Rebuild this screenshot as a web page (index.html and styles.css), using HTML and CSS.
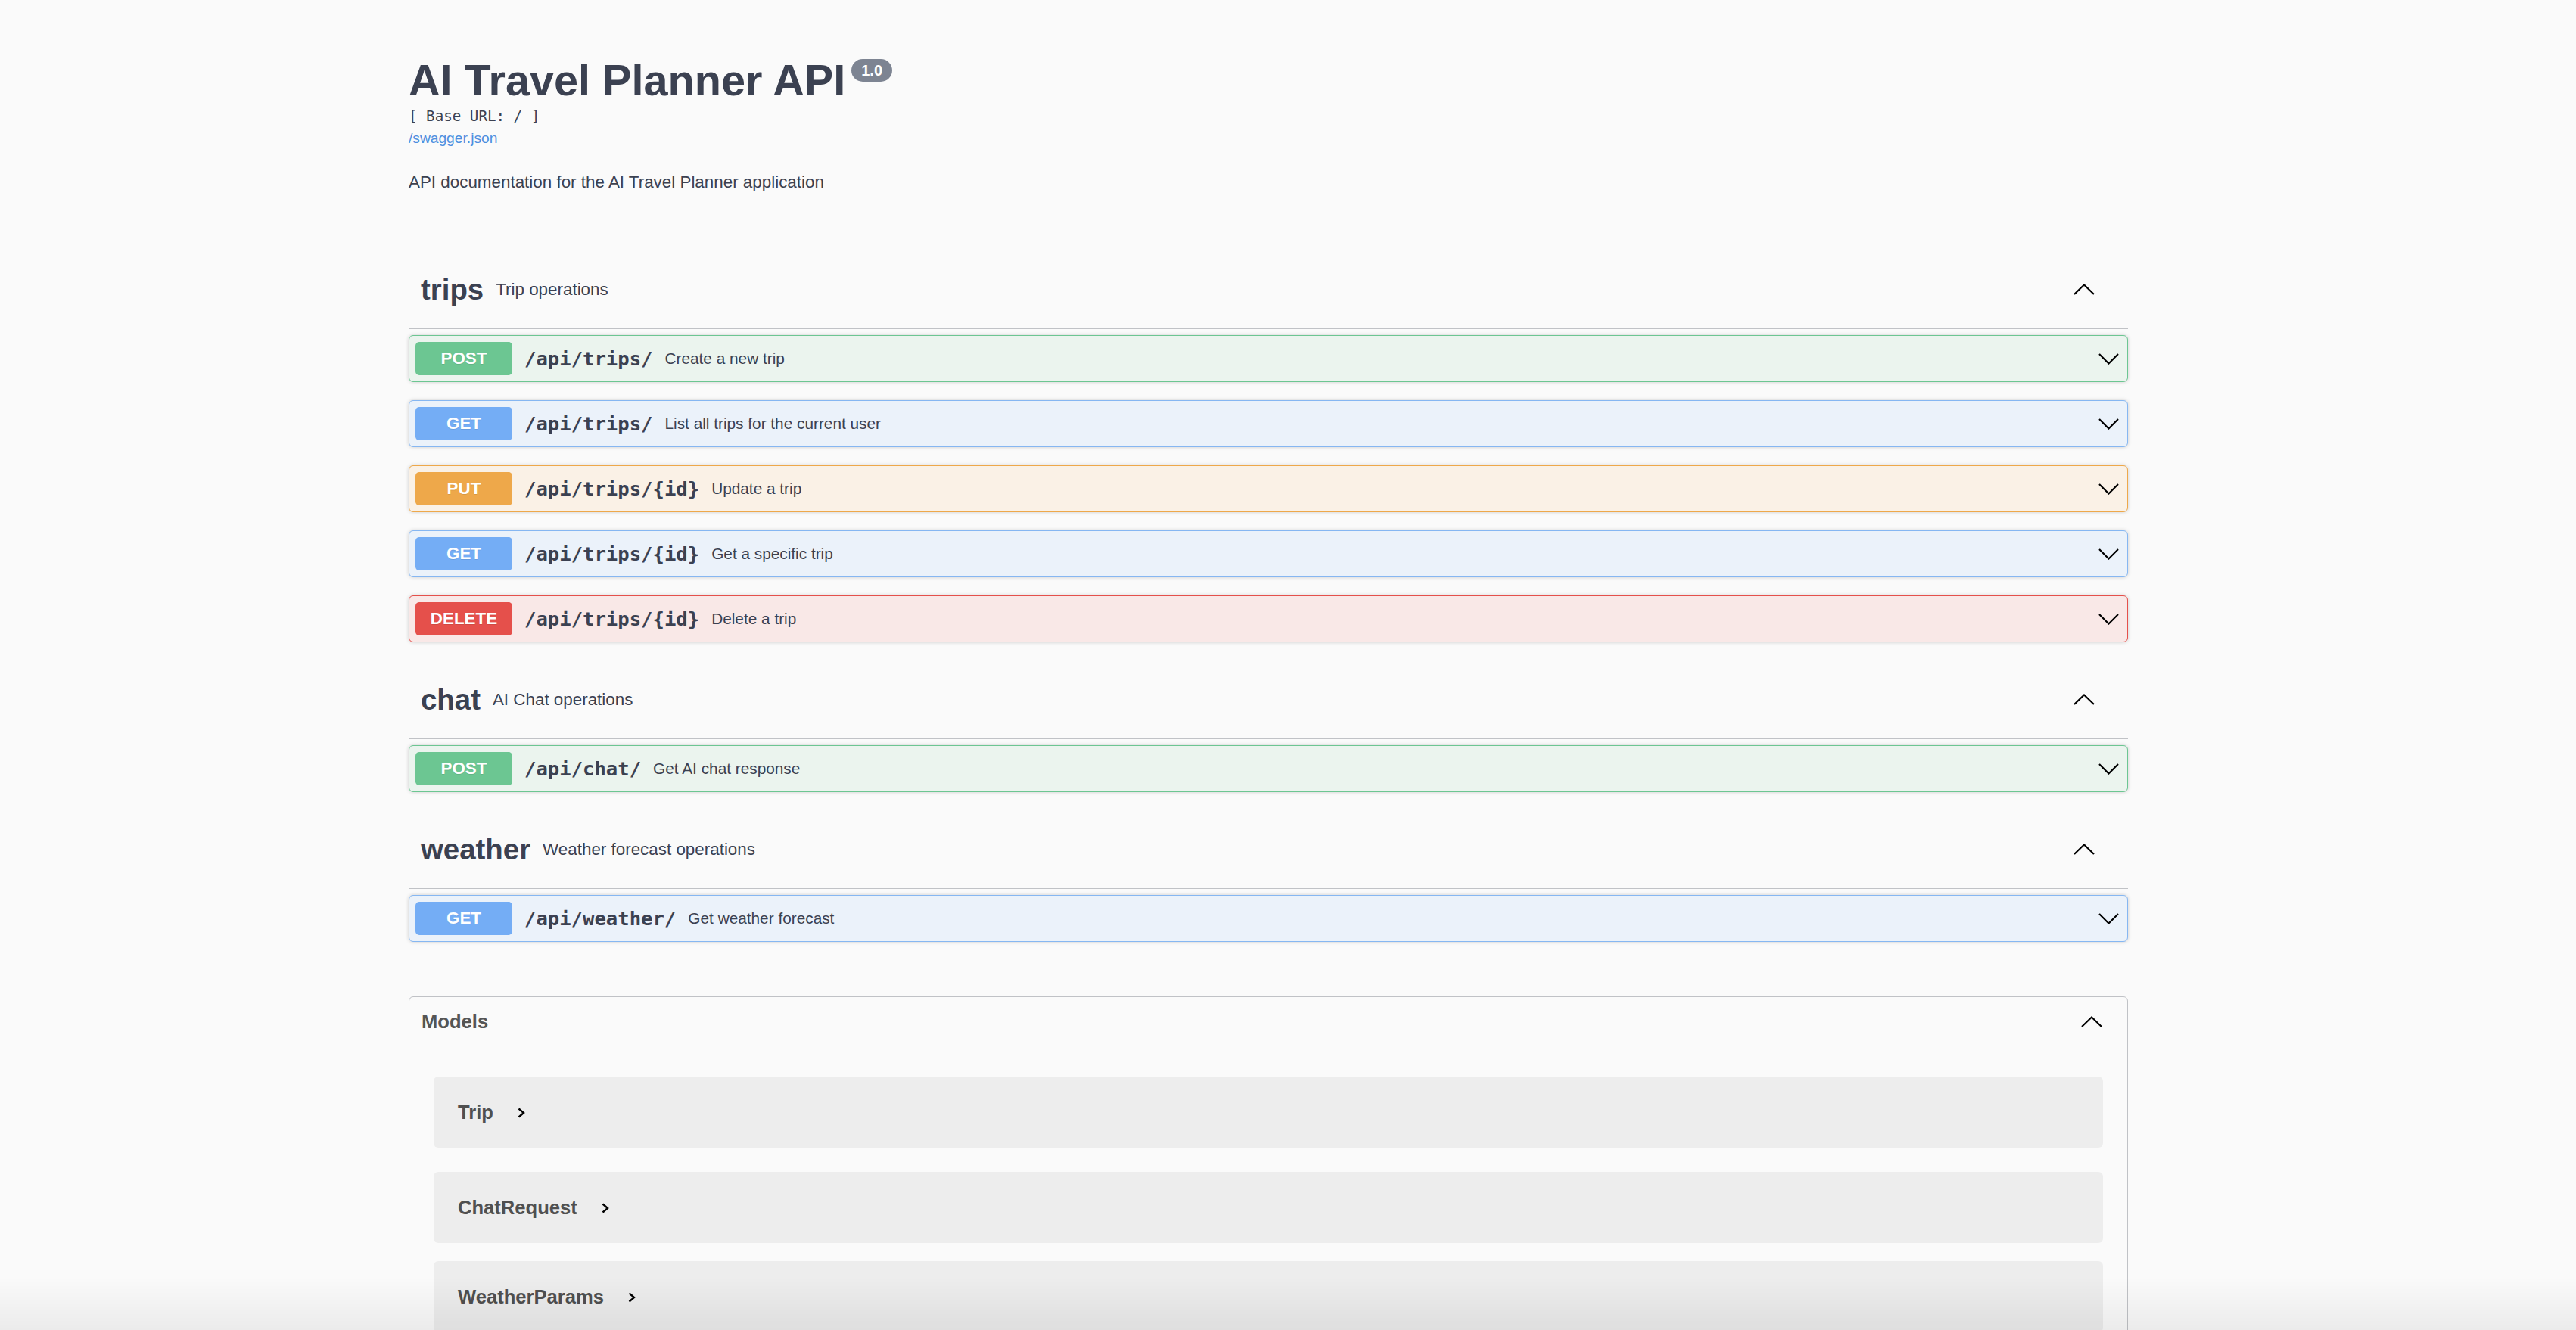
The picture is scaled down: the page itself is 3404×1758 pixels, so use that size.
FILE: index.html
```html
<!DOCTYPE html>
<html lang="en">
<head>
<meta charset="utf-8">
<title>AI Travel Planner API</title>
<link rel="stylesheet" href="styles.css">
</head>
<body>
<div class="wrapper">
  <header class="info">
    <h2 class="title">AI Travel Planner API<span class="version">1.0</span></h2>
    <div class="base-url">[ Base URL: / ]</div>
    <a class="spec-link" href="#">/swagger.json</a>
    <p class="description">API documentation for the AI Travel Planner application</p>
  </header>

  <section class="tag-section">
    <h3 class="tag">
      <span class="tag-name">trips</span>
      <small class="tag-desc">Trip operations</small>
      <svg class="chev-up" width="28" height="15" viewBox="0 0 28 15"><polyline points="1,14 14,1.5 27,14" fill="none" stroke="#000" stroke-width="2.2"/></svg>
    </h3>
    <div class="opblock post">
      <span class="method">POST</span>
      <span class="path">/api/trips/</span>
      <span class="summary">Create a new trip</span>
      <svg class="chev-down" width="27" height="15" viewBox="0 0 27 15"><polyline points="1,1 13.5,13.5 26,1" fill="none" stroke="#000" stroke-width="2.2"/></svg>
    </div>
    <div class="opblock get">
      <span class="method">GET</span>
      <span class="path">/api/trips/</span>
      <span class="summary">List all trips for the current user</span>
      <svg class="chev-down" width="27" height="15" viewBox="0 0 27 15"><polyline points="1,1 13.5,13.5 26,1" fill="none" stroke="#000" stroke-width="2.2"/></svg>
    </div>
    <div class="opblock put">
      <span class="method">PUT</span>
      <span class="path">/api/trips/{id}</span>
      <span class="summary">Update a trip</span>
      <svg class="chev-down" width="27" height="15" viewBox="0 0 27 15"><polyline points="1,1 13.5,13.5 26,1" fill="none" stroke="#000" stroke-width="2.2"/></svg>
    </div>
    <div class="opblock get">
      <span class="method">GET</span>
      <span class="path">/api/trips/{id}</span>
      <span class="summary">Get a specific trip</span>
      <svg class="chev-down" width="27" height="15" viewBox="0 0 27 15"><polyline points="1,1 13.5,13.5 26,1" fill="none" stroke="#000" stroke-width="2.2"/></svg>
    </div>
    <div class="opblock delete">
      <span class="method">DELETE</span>
      <span class="path">/api/trips/{id}</span>
      <span class="summary">Delete a trip</span>
      <svg class="chev-down" width="27" height="15" viewBox="0 0 27 15"><polyline points="1,1 13.5,13.5 26,1" fill="none" stroke="#000" stroke-width="2.2"/></svg>
    </div>
  </section>

  <section class="tag-section">
    <h3 class="tag">
      <span class="tag-name">chat</span>
      <small class="tag-desc">AI Chat operations</small>
      <svg class="chev-up" width="28" height="15" viewBox="0 0 28 15"><polyline points="1,14 14,1.5 27,14" fill="none" stroke="#000" stroke-width="2.2"/></svg>
    </h3>
    <div class="opblock post">
      <span class="method">POST</span>
      <span class="path">/api/chat/</span>
      <span class="summary">Get AI chat response</span>
      <svg class="chev-down" width="27" height="15" viewBox="0 0 27 15"><polyline points="1,1 13.5,13.5 26,1" fill="none" stroke="#000" stroke-width="2.2"/></svg>
    </div>
  </section>

  <section class="tag-section">
    <h3 class="tag">
      <span class="tag-name">weather</span>
      <small class="tag-desc">Weather forecast operations</small>
      <svg class="chev-up" width="28" height="15" viewBox="0 0 28 15"><polyline points="1,14 14,1.5 27,14" fill="none" stroke="#000" stroke-width="2.2"/></svg>
    </h3>
    <div class="opblock get">
      <span class="method">GET</span>
      <span class="path">/api/weather/</span>
      <span class="summary">Get weather forecast</span>
      <svg class="chev-down" width="27" height="15" viewBox="0 0 27 15"><polyline points="1,1 13.5,13.5 26,1" fill="none" stroke="#000" stroke-width="2.2"/></svg>
    </div>
  </section>

  <section class="models">
    <h4 class="models-head">
      <span class="models-title">Models</span>
      <svg class="chev-up" width="28" height="15" viewBox="0 0 28 15"><polyline points="1,14 14,1.5 27,14" fill="none" stroke="#000" stroke-width="2.2"/></svg>
    </h4>
    <div class="model-container">
      <span class="model-title">Trip</span>
      <svg class="chev-right" width="10" height="14" viewBox="0 0 10 14"><polyline points="1.5,1.5 8,7 1.5,12.5" fill="none" stroke="#000" stroke-width="2.4"/></svg>
    </div>
    <div class="model-container">
      <span class="model-title">ChatRequest</span>
      <svg class="chev-right" width="10" height="14" viewBox="0 0 10 14"><polyline points="1.5,1.5 8,7 1.5,12.5" fill="none" stroke="#000" stroke-width="2.4"/></svg>
    </div>
    <div class="model-container">
      <span class="model-title">WeatherParams</span>
      <svg class="chev-right" width="10" height="14" viewBox="0 0 10 14"><polyline points="1.5,1.5 8,7 1.5,12.5" fill="none" stroke="#000" stroke-width="2.4"/></svg>
    </div>
  </section>
</div>
<div class="bottom-shade"></div>
</body>
</html>
```

FILE: styles.css
```css
* {
  box-sizing: border-box;
}

html, body {
  background: #fafafa;
}

body {
  margin: 0;
  padding: 0 52px 0 0;
  font-family: "Liberation Sans", Arial, Helvetica, sans-serif;
  color: #3b4151;
}

.wrapper {
  width: 2272px;
  margin: 0 auto;
}

/* ---------- info ---------- */
.info {
  padding-top: 73px;
  margin-bottom: 77px;
}

.title {
  margin: 0;
  font-size: 57.6px;
  line-height: 66px;
  font-weight: 700;
  color: #3b4151;
}

.version {
  display: inline-block;
  vertical-align: top;
  margin: 5px 0 0 8px;
  height: 30px;
  line-height: 30px;
  padding: 0 13px;
  border-radius: 57px;
  background: #7d8492;
  color: #fff;
  font-size: 20px;
  font-weight: 700;
}

.base-url {
  margin-top: 3px;
  font-family: "DejaVu Sans Mono", "Liberation Mono", monospace;
  font-size: 19.2px;
  line-height: 23px;
  color: #3b4151;
}

.spec-link {
  display: block;
  margin-top: 6px;
  font-size: 19.2px;
  line-height: 23px;
  color: #4d8fe0;
  text-decoration: none;
}

.description {
  margin: 33px 0 0;
  font-size: 22.4px;
  line-height: 27px;
  color: #3b4151;
}

/* ---------- tags ---------- */
.tag-section {
  display: flex;
  flex-direction: column;
}

.tag {
  margin: 0 0 8px;
  height: 104px;
  display: flex;
  align-items: center;
  padding: 0 44px 0 16px;
  border-bottom: 1px solid rgba(59, 65, 81, 0.3);
}

.tag-name {
  font-size: 38.4px;
  line-height: 44px;
  font-weight: 700;
  color: #3b4151;
}

.tag-desc {
  flex: 1;
  padding: 0 16px;
  font-size: 22.4px;
  font-weight: 400;
  color: #3b4151;
}

.chev-up {
  display: block;
  flex: none;
}

/* ---------- operations ---------- */
.opblock {
  display: flex;
  align-items: center;
  padding: 8px;
  margin-bottom: 24px;
  border: 1px solid;
  border-radius: 6px;
  box-shadow: 0 0 5px rgba(0, 0, 0, 0.19);
}

.method {
  flex: none;
  width: 128px;
  height: 44px;
  line-height: 44px;
  text-align: center;
  border-radius: 5px;
  color: #fff;
  font-size: 22.4px;
  font-weight: 700;
  text-shadow: 0 1px 0 rgba(0, 0, 0, 0.1);
}

.path {
  padding: 0 16px;
  font-family: "DejaVu Sans Mono", "Liberation Mono", monospace;
  font-size: 25.6px;
  font-weight: 700;
  color: #3b4151;
}

.summary {
  flex: 1;
  font-size: 20.8px;
  color: #3b4151;
}

.chev-down {
  display: block;
  flex: none;
  margin-right: 3px;
}

.opblock.post {
  background: #ebf4ee;
  border-color: #6cc692;
}
.opblock.post .method {
  background: #6cc692;
}

.opblock.get {
  background: #ebf2fa;
  border-color: #86b7f2;
}
.opblock.get .method {
  background: #74adf5;
}

.opblock.put {
  background: #faf1e6;
  border-color: #eea84a;
}
.opblock.put .method {
  background: #eea84a;
}

.opblock.delete {
  background: #f9e8e7;
  border-color: #e5504b;
}
.opblock.delete .method {
  background: #e5504b;
}

/* ---------- models ---------- */
.models {
  margin-top: 48px;
  border: 1px solid rgba(59, 65, 81, 0.3);
  border-radius: 6px;
}

.models-head {
  margin: 0;
  height: 73px;
  display: flex;
  align-items: center;
  padding: 0 33px 8px 16px;
  border-bottom: 1px solid rgba(59, 65, 81, 0.3);
}

.models-title {
  flex: 1;
  font-size: 25.6px;
  font-weight: 700;
  color: #555555;
}

.model-container {
  display: flex;
  align-items: center;
  height: 94px;
  margin: 0 32px 24px;
  padding-left: 32px;
  border-radius: 6px;
  background: rgba(0, 0, 0, 0.05);
}

.model-container:first-of-type {
  margin: 32px;
}

.model-title {
  font-size: 25.6px;
  font-weight: 700;
  color: #505050;
}

.chev-right {
  display: block;
  margin-left: 32px;
  margin-top: 2px;
}

/* bottom window shade */
.bottom-shade {
  position: fixed;
  left: 0;
  right: 0;
  bottom: 0;
  height: 70px;
  pointer-events: none;
  background: linear-gradient(to bottom, rgba(0, 0, 0, 0), rgba(0, 0, 0, 0.06));
}
```
